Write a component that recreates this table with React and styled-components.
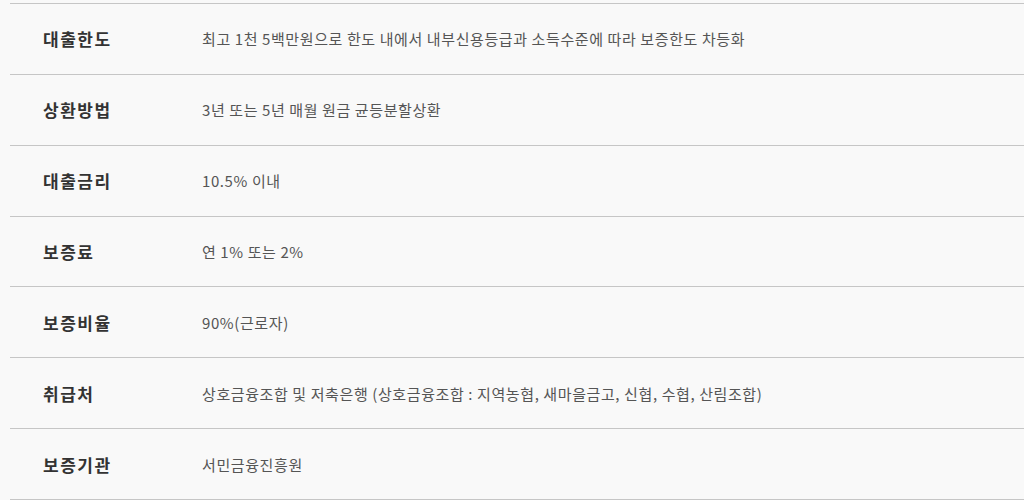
import React from "react";
import styled, { createGlobalStyle } from "styled-components";

const GlobalStyle = createGlobalStyle`
  html, body {
    margin: 0;
    padding: 0;
    background: #f9f9f9;
  }
  body {
    font-family: "Noto Sans CJK KR", "Noto Sans", sans-serif;
  }
`;

const rows = [
  { label: "대출한도", value: "최고 1천 5백만원으로 한도 내에서 내부신용등급과 소득수준에 따라 보증한도 차등화" },
  { label: "상환방법", value: "3년 또는 5년 매월 원금 균등분할상환" },
  { label: "대출금리", value: "10.5% 이내" },
  { label: "보증료", value: "연 1% 또는 2%" },
  { label: "보증비율", value: "90%(근로자)" },
  { label: "취급처", value: "상호금융조합 및 저축은행 (상호금융조합 : 지역농협, 새마을금고, 신협, 수협, 산림조합)" },
  { label: "보증기관", value: "서민금융진흥원" },
];

const Wrap = styled.div`
  padding: 3px 0 0 10px;
  background: #f9f9f9;
  height: 500px;
  box-sizing: border-box;
  overflow: hidden;
`;

const Table = styled.dl`
  margin: 0;
  border-top: 1px solid #c6c6c6;
`;

const Row = styled.div`
  display: flex;
  align-items: center;
  height: 70.86px;
  box-sizing: border-box;
  border-bottom: 1px solid #c6c6c6;
`;

const Label = styled.dt`
  width: 192px;
  padding-left: 33px;
  box-sizing: border-box;
  font-size: 17px;
  font-weight: 700;
  letter-spacing: 1.5px;
  color: #333;
`;

const Value = styled.dd`
  margin: 0;
  font-size: 15px;
  color: #555;
  letter-spacing: 0.6px;
`;

export default function App() {
  return (
    <Wrap>
      <GlobalStyle />
      <Table>
        {rows.map((r) => (
          <Row key={r.label}>
            <Label>{r.label}</Label>
            <Value>{r.value}</Value>
          </Row>
        ))}
      </Table>
    </Wrap>
  );
}
